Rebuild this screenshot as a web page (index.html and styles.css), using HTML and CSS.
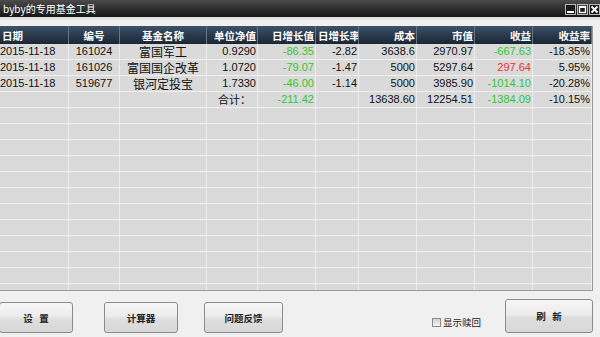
FILE: index.html
```html
<!DOCTYPE html>
<html lang="zh">
<head>
<meta charset="utf-8">
<title>byby的专用基金工具</title>
<link rel="stylesheet" href="styles.css">
</head>
<body>
<div class="window">
  <div class="titlebar">
    <span class="title">byby的专用基金工具</span>
    <div class="controls">
      <span class="ctl"><svg width="9" height="9" viewBox="0 0 9 9"><rect x="1" y="6" width="7" height="2" fill="#fff"/></svg></span>
      <span class="ctl"><svg width="9" height="9" viewBox="0 0 9 9"><rect x="1.5" y="1.5" width="6" height="6" fill="none" stroke="#fff" stroke-width="1.4"/><rect x="1" y="1" width="7" height="2" fill="#fff"/></svg></span>
      <span class="ctl"><svg width="9" height="9" viewBox="0 0 9 9"><path d="M1.5 1.5 L7.5 7.5 M7.5 1.5 L1.5 7.5" stroke="#fff" stroke-width="1.8"/></svg></span>
    </div>
  </div>
  <div class="band"></div>
  <div class="grid-wrap">
    <table class="grid">
      <colgroup>
        <col style="width:69px"><col style="width:51px"><col style="width:87px"><col style="width:51px"><col style="width:58px"><col style="width:43px"><col style="width:58px"><col style="width:58px"><col style="width:58px"><col style="width:59px">
      </colgroup>
      <thead>
        <tr>
          <th class="l">日期</th><th class="c">编号</th><th class="c">基金名称</th><th>单位净值</th><th>日增长值</th><th class="l">日增长率</th><th>成本</th><th>市值</th><th>收益</th><th>收益率</th>
        </tr>
      </thead>
      <tbody>
        <tr><td class="l">2015-11-18</td><td class="c">161024</td><td class="c cjk">富国军工</td><td>0.9290</td><td class="g">-86.35</td><td>-2.82</td><td>3638.6</td><td>2970.97</td><td class="g">-667.63</td><td>-18.35%</td></tr>
        <tr><td class="l">2015-11-18</td><td class="c">161026</td><td class="c cjk">富国国企改革</td><td>1.0720</td><td class="g">-79.07</td><td>-1.47</td><td>5000</td><td>5297.64</td><td class="r">297.64</td><td>5.95%</td></tr>
        <tr><td class="l">2015-11-18</td><td class="c">519677</td><td class="c cjk">银河定投宝</td><td>1.7330</td><td class="g">-46.00</td><td>-1.14</td><td>5000</td><td>3985.90</td><td class="g">-1014.10</td><td>-20.28%</td></tr>
        <tr><td></td><td></td><td></td><td class="sum">合计：</td><td class="g">-211.42</td><td></td><td>13638.60</td><td>12254.51</td><td class="g">-1384.09</td><td>-10.15%</td></tr>
        <tr><td></td><td></td><td></td><td></td><td></td><td></td><td></td><td></td><td></td><td></td></tr>
        <tr><td></td><td></td><td></td><td></td><td></td><td></td><td></td><td></td><td></td><td></td></tr>
        <tr><td></td><td></td><td></td><td></td><td></td><td></td><td></td><td></td><td></td><td></td></tr>
        <tr><td></td><td></td><td></td><td></td><td></td><td></td><td></td><td></td><td></td><td></td></tr>
        <tr><td></td><td></td><td></td><td></td><td></td><td></td><td></td><td></td><td></td><td></td></tr>
        <tr><td></td><td></td><td></td><td></td><td></td><td></td><td></td><td></td><td></td><td></td></tr>
        <tr><td></td><td></td><td></td><td></td><td></td><td></td><td></td><td></td><td></td><td></td></tr>
        <tr><td></td><td></td><td></td><td></td><td></td><td></td><td></td><td></td><td></td><td></td></tr>
        <tr><td></td><td></td><td></td><td></td><td></td><td></td><td></td><td></td><td></td><td></td></tr>
        <tr><td></td><td></td><td></td><td></td><td></td><td></td><td></td><td></td><td></td><td></td></tr>
        <tr><td></td><td></td><td></td><td></td><td></td><td></td><td></td><td></td><td></td><td></td></tr>
        <tr><td></td><td></td><td></td><td></td><td></td><td></td><td></td><td></td><td></td><td></td></tr>
        <tr><td></td><td></td><td></td><td></td><td></td><td></td><td></td><td></td><td></td><td></td></tr>
      </tbody>
    </table>
  </div>
  <div class="footer">
    <button class="btn b1">设&nbsp;&nbsp;&nbsp;置</button>
    <button class="btn b2">计算器</button>
    <button class="btn b3">问题反馈</button>
    <label class="check"><span class="box"></span>显示赎回</label>
    <button class="btn b4">刷&nbsp;&nbsp;&nbsp;新</button>
  </div>
</div>
</body>
</html>
```

FILE: styles.css
```css
html, body {
  margin: 0;
  padding: 0;
  background: #f0f0f0;
}
.window {
  width: 600px;
  height: 337px;
  overflow: hidden;
  background: #f0f0f0;
  font-family: "Noto Sans CJK SC", sans-serif;
}
.titlebar {
  height: 17px;
  background: linear-gradient(#4b4b4b, #2a2a2a 60%, #151515);
  display: flex;
  align-items: center;
  justify-content: space-between;
}
.title {
  color: #fff;
  font-size: 10px;
  line-height: 17px;
  padding-left: 3px;
}
.controls {
  display: flex;
  gap: 1px;
  align-self: flex-start;
  margin-top: 4px;
}
.ctl {
  width: 9px;
  height: 9px;
  border: 1px solid #b8b8b8;
  background: #1a1a1a;
  display: flex;
  align-items: center;
  justify-content: center;
}
.band {
  height: 9px;
  background: linear-gradient(#d8d8d8, #eeeeee 40%, #f0f0f0);
}
.grid-wrap {
  width: 592px;
  height: 264px;
  overflow: hidden;
  border-right: 1px solid #9a9a9a;
  border-bottom: 1px solid #9a9a9a;
  background: #dadada;
}
.grid {
  table-layout: fixed;
  width: 592px;
  border-collapse: separate;
  border-spacing: 0;
}
.grid th {
  height: 18px;
  padding: 0 1px;
  background: linear-gradient(#3f5369, #2a3a4d 50%, #1b2634);
  color: #fff;
  font-size: 10.5px;
  font-weight: bold;
  text-align: right;
  border-right: 1px solid #627488;
  white-space: nowrap;
  overflow: hidden;
  box-sizing: border-box;
}
.grid th.l { padding-left: 2px; }
.grid td {
  height: 15px;
  padding: 0 1px 0 1px;
  background: #dadada;
  border-right: 1px solid #eeeeee;
  border-bottom: 1px solid #eeeeee;
  font-family: "Liberation Sans", "Noto Sans CJK SC", sans-serif;
  font-size: 11px;
  color: #111;
  text-align: right;
  white-space: nowrap;
  overflow: hidden;
  line-height: 15px;
}
.grid td.l, .grid th.l { text-align: left; }
.grid td.l { padding-left: 0; }
.grid td.c, .grid th.c { text-align: center; }
.grid td.cjk {
  font-family: "Noto Sans CJK SC", sans-serif;
  font-size: 12px;
}
.grid td.sum {
  font-family: "Noto Sans CJK SC", sans-serif;
  font-size: 11px;
  text-align: right;
  padding-right: 6px;
}
.grid td.g { color: #2fc82f; }
.grid td.r { color: #f23030; }

.footer {
  height: 46px;
  display: flex;
  align-items: flex-start;
}
.btn {
  height: 31px;
  margin-top: 11px;
  border: 1px solid #8c8c8c;
  border-radius: 3px;
  background: linear-gradient(#f6f6f6, #ececec 45%, #dedede 55%, #d8d8d8);
  font-family: "Noto Sans CJK SC", sans-serif;
  font-size: 9.5px;
  font-weight: bold;
  color: #222;
  padding: 0;
}
.b1 { width: 74px; margin-left: -1px; }
.b2 { width: 74px; margin-left: 31px; }
.b3 { width: 79px; margin-left: 26px; }
.b4 { width: 88px; height: 34px; margin-top: 8px; margin-left: 24px; }
.check {
  display: flex;
  align-items: center;
  margin-left: 149px;
  margin-top: 24px;
  font-size: 9.5px;
  color: #222;
  gap: 2px;
}
.box {
  width: 7px;
  height: 7px;
  border: 1px solid #8a8a8a;
  background: linear-gradient(#d0d0d0, #f4f4f4);
}
```
